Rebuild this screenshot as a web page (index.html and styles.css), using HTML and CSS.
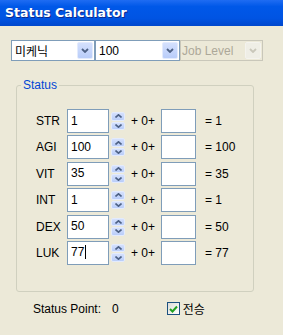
FILE: index.html
```html
<!DOCTYPE html>
<html lang="ko">
<head>
	<meta http-equiv="Content-Type" content="text/html;charset=UTF-8">
	<link rel="stylesheet" href="styles.css">
</head>
<body>

<div class="titlebar">Status Calculator</div>

<div class="combos">
	<div class="combo combo_job">
		<span class="combo__text combo__text_kr">미케닉</span>
		<span class="combo__btn"><svg width="8" height="5" viewBox="0 0 8 5"><polyline points="1,1 4,4 7,1" fill="none" stroke="#4d6185" stroke-width="1.8"/></svg></span>
	</div>
	<div class="combo combo_level">
		<span class="combo__text">100</span>
		<span class="combo__btn"><svg width="8" height="5" viewBox="0 0 8 5"><polyline points="1,1 4,4 7,1" fill="none" stroke="#4d6185" stroke-width="1.8"/></svg></span>
	</div>
	<div class="combo combo_disabled">
		<span class="combo__text">Job Level</span>
		<span class="combo__btn"><svg width="8" height="5" viewBox="0 0 8 5"><polyline points="1,1 4,4 7,1" fill="none" stroke="#c9c7ba" stroke-width="1.8"/></svg></span>
	</div>
</div>

<fieldset class="group">
	<legend class="group__title">Status</legend>
	<div class="stats"></div>
</fieldset>

<div class="footer">
	<span class="footer__label">Status Point:</span>
	<span class="footer__value">0</span>
	<span class="check"><svg width="9" height="8" viewBox="0 0 9 8"><polyline points="1,4 3.5,6.5 8,1.5" fill="none" stroke="#21a121" stroke-width="2"/></svg></span>
	<span class="footer__kr">전승</span>
</div>

	<script>
		'use strict';

		const STATS = [
			{ name: 'STR', value: '1' },
			{ name: 'AGI', value: '100' },
			{ name: 'VIT', value: '35' },
			{ name: 'INT', value: '1' },
			{ name: 'DEX', value: '50' },
			{ name: 'LUK', value: '77', caret: true },
		];

		const arrow = (points) =>
		`<svg width="7" height="4" viewBox="0 0 7 4"><polyline points="${points}" fill="none" stroke="#4d6185" stroke-width="1.6"/></svg>`;

		const statRowTemplate = (item) =>
		`<div class="stat">
			<span class="stat__name">${item.name}</span>
			<span class="stat__input">${item.value}${item.caret ? '<span class="caret"></span>' : ''}</span>
			<span class="spin">
				<span class="spin__btn">${arrow('0.5,3.5 3.5,0.8 6.5,3.5')}</span>
				<span class="spin__btn">${arrow('0.5,0.5 3.5,3.2 6.5,0.5')}</span>
			</span>
			<span class="stat__plus">+ 0+</span>
			<span class="stat__bonus"></span>
			<span class="stat__total">= ${item.value}</span>
		</div>`;

		var stats = document.querySelector('.stats');
		stats.innerHTML = STATS.map(statRowTemplate).join('');
	</script>
</body>
</html>
```

FILE: styles.css
```css
body {
	margin: 0;
	width: 283px;
	height: 335px;
	background: #ece9d8;
	font-family: "Liberation Sans", Arial, sans-serif;
	font-size: 12px;
	color: #000;
	overflow: hidden;
}

.titlebar {
	height: 26px;
	padding-left: 5px;
	line-height: 26px;
	background: linear-gradient(#1f6cf2, #0058e8 25%, #0054e3 70%, #0047cc);
	color: #fff;
	font-family: "DejaVu Sans", sans-serif;
	font-size: 12.5px;
	font-weight: bold;
	text-shadow: 1px 1px 0 #0c2a8c;
}

.combos {
	display: flex;
	margin: 14px 0 0 11px;
}

.combo {
	display: flex;
	align-items: center;
	box-sizing: border-box;
	height: 21px;
	border: 1px solid #7f9db9;
	background: #fff;
}

.combo_job {
	width: 84px;
}

.combo_level {
	width: 85px;
}

.combo_disabled {
	width: 83px;
	border-color: #c9c7ba;
	background: #ece9d8;
	color: #aca899;
}

.combo__text {
	padding-left: 3px;
	line-height: 14px;
}

.combo_disabled .combo__text {
	padding-left: 1px;
}

.combo__text_kr {
	font-family: "Noto Sans CJK KR", sans-serif;
}

.combo__btn {
	display: flex;
	align-items: center;
	justify-content: center;
	box-sizing: border-box;
	width: 16px;
	height: 17px;
	margin-left: auto;
	margin-right: 1px;
	border: 1px solid #e3ebfd;
	border-radius: 2px;
	background: linear-gradient(#d4e0fd, #b9cdf9);
}

.combo_disabled .combo__btn {
	border-color: #f4f3ee;
	background: #efeee6;
}

.group {
	box-sizing: border-box;
	width: 238px;
	margin: 17px 0 0 16px;
	padding: 17px 0 26px 0;
	border: 1px solid #d0d0bf;
	border-radius: 3px;
	min-width: 0;
}

.group__title {
	margin-left: 4px;
	padding: 0 2px;
	line-height: 14px;
	color: #0046d5;
}

.stats {
	display: flex;
	flex-direction: column;
	gap: 2.4px;
	padding-left: 19px;
}

.stat {
	display: flex;
	align-items: center;
	height: 24px;
}

.stat__name {
	width: 31px;
}

.stat__input {
	display: flex;
	align-items: center;
	box-sizing: border-box;
	width: 42px;
	height: 24px;
	padding: 0 0 1px 3px;
	border: 1px solid #7f9db9;
	background: #fff;
}

.caret {
	width: 1px;
	height: 14px;
	margin-left: 1px;
	background: #000;
}

.spin {
	display: flex;
	flex-direction: column;
	width: 14px;
	height: 18px;
	margin-left: 2px;
	gap: 1px;
}

.spin__btn {
	display: flex;
	align-items: center;
	justify-content: center;
	box-sizing: border-box;
	flex: 1;
	border: 1px solid #e3ebfd;
	border-radius: 2px;
	background: linear-gradient(#d4e0fd, #b9cdf9);
}

.stat__plus {
	width: 30px;
	margin-left: 6px;
}

.stat__bonus {
	box-sizing: border-box;
	width: 35px;
	height: 24px;
	border: 1px solid #7f9db9;
	background: #fff;
}

.stat__total {
	margin-left: 9px;
}

.footer {
	display: flex;
	align-items: center;
	height: 14px;
	margin: 10px 0 0 33px;
}

.footer__value {
	margin-left: 11px;
}

.check {
	display: flex;
	align-items: center;
	justify-content: center;
	box-sizing: border-box;
	width: 13px;
	height: 13px;
	margin-left: 48px;
	border: 1px solid #1c5180;
	background: linear-gradient(135deg, #dcdcd7, #fff);
}

.footer__kr {
	margin-left: 3px;
	font-family: "Noto Sans CJK KR", sans-serif;
}
```
